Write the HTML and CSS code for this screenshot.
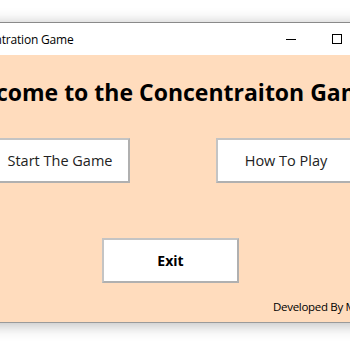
FILE: index.html
```html
<!DOCTYPE html>
<html lang="en">
<head>
    <meta charset="UTF-8">
    <meta name="viewport" content="width=device-width, initial-scale=1.0">
    <title>Concentration Game</title>
    <link rel="stylesheet" href="styles.css">
</head>
<body>

    <div class="desktop">
        <!-- 遊戲主視窗 -->
        <div class="window">
            <div class="titlebar">
                <span class="title">Concentration Game</span>
                <div class="controls">
                    <span class="ctl"><span class="min"></span></span>
                    <span class="ctl"><span class="max"></span></span>
                    <span class="ctl close">&#x2715;</span>
                </div>
            </div>

            <div class="client">
                <h1>Welcome to the Concentraiton Game</h1>

                <div class="menu-row">
                    <button class="btn">Start The Game</button>
                    <button class="btn">How To Play</button>
                </div>

                <div class="exit-row">
                    <button class="btn btn-exit">Exit</button>
                </div>

                <div class="credit">Developed By Mohammad</div>
            </div>
        </div>
    </div>

</body>
</html>
```

FILE: styles.css
```css
/* 桌面與視窗 */
body {
    margin: 0;
    padding: 0;
    background-color: #ffffff;
    overflow: hidden;
    font-family: "Open Sans", "Noto Sans", sans-serif;
}

.desktop {
    width: 350px;
    height: 350px;
    overflow: hidden;
    background-color: #ffffff;
    padding-top: 22px;
    box-sizing: border-box;
}

.window {
    margin-left: -60px;
    width: 466px;
    border-top: 1px solid #8a8a8a;
    border-bottom: 1px solid #9a9a9a;
    box-shadow: 0 2px 14px rgba(0, 0, 0, 0.28);
}

.titlebar {
    height: 32px;
    background-color: #ffffff;
    display: flex;
    align-items: center;
}

.title {
    font-size: 12px;
    color: #000;
    padding-left: 21px;
    letter-spacing: -0.2px;
}

.controls {
    margin-left: auto;
    display: flex;
    height: 100%;
}

.ctl {
    width: 46px;
    display: flex;
    align-items: center;
    justify-content: center;
    font-size: 11px;
}

.min {
    width: 10px;
    height: 1px;
    background-color: #000;
}

.max {
    width: 8px;
    height: 8px;
    border: 1px solid #000;
}

.client {
    background-color: #ffdcbd;
    height: 267px;
    display: flex;
    flex-direction: column;
}

h1 {
    margin: 21px 0 0 0;
    padding-right: 16px;
    font-size: 23px;
    font-weight: 700;
    text-align: center;
    white-space: nowrap;
    color: #000;
    line-height: 32px;
}

.menu-row {
    display: flex;
    justify-content: space-between;
    padding: 0 50px 0 50px;
    margin-top: 30px;
}

.btn {
    width: 140px;
    height: 45px;
    background-color: #ffffff;
    border: 2px solid #c4c4c4;
    border-right-color: #b0b0b0;
    border-bottom-color: #b0b0b0;
    font-family: "Open Sans", "Noto Sans", sans-serif;
    font-size: 14.5px;
    color: #222;
    padding: 0;
}

.exit-row {
    display: flex;
    padding-left: 162px;
    margin-top: 55px;
}

.btn-exit {
    width: 137px;
    font-weight: 700;
    color: #000;
    font-size: 14px;
}

.credit {
    margin-top: 16px;
    padding-left: 333px;
    font-size: 11.5px;
    letter-spacing: -0.3px;
    color: #000;
    white-space: nowrap;
}
```
